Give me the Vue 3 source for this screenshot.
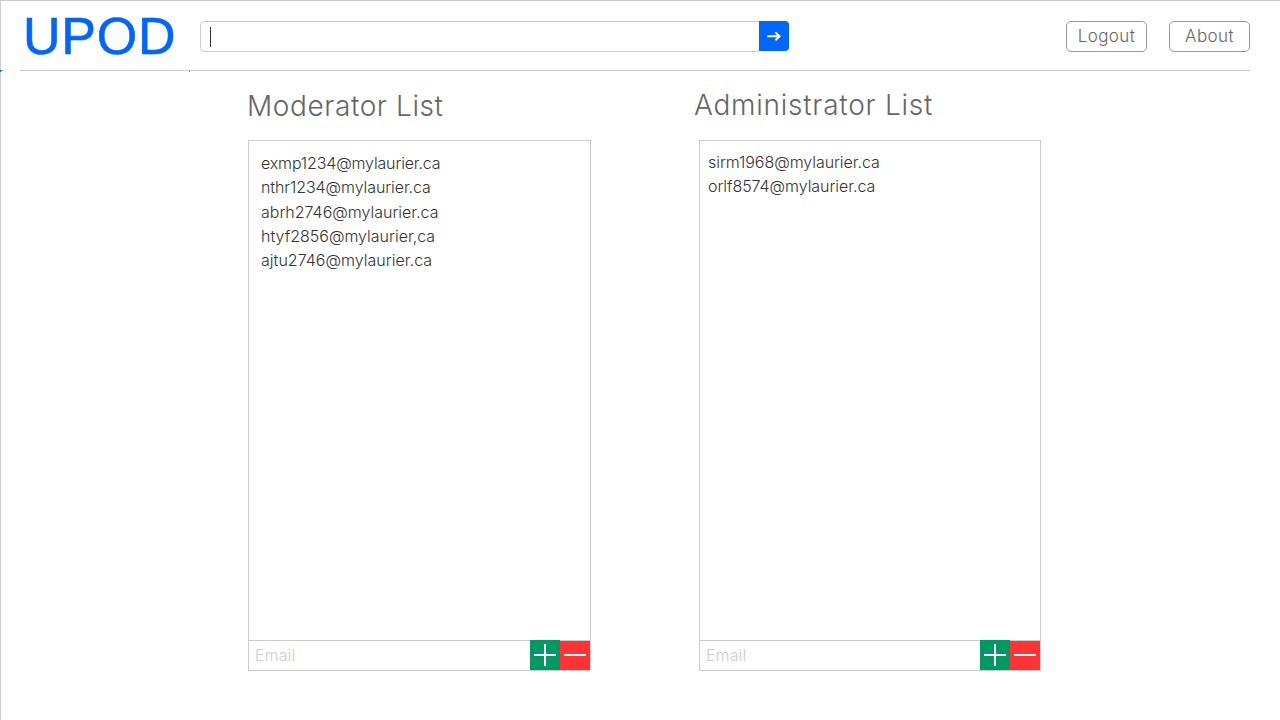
<script setup>
import { ref } from 'vue'

const query = ref('')
const lists = [
  {
    id: 'moderator',
    title: 'Moderator List',
    emails: [
      { address: 'exmp1234@mylaurier.ca', spacing: -0.15 },
      { address: 'nthr1234@mylaurier.ca', spacing: -0.08 },
      { address: 'abrh2746@mylaurier.ca', spacing: 0 },
      { address: 'htyf2856@mylaurier,ca', spacing: 0 },
      { address: 'ajtu2746@mylaurier.ca', spacing: 0.03 },
    ],
  },
  {
    id: 'administrator',
    title: 'Administrator List',
    emails: [
      { address: 'sirm1968@mylaurier.ca', spacing: -0.05 },
      { address: 'orlf8574@mylaurier.ca', spacing: -0.05 },
    ],
  },
]
</script>

<template>
  <div class="page">
    <header class="bar">
      <div class="logo">UPOD</div>
      <div class="search">
        <div class="field"><span class="caret"></span>{{ query }}</div>
        <button class="go" aria-label="Search">
          <svg width="30" height="30" viewBox="0 0 30 30">
            <path d="M8.3 15.3H20.5M16.4 11.4L20.5 15.3L16.4 19.2" fill="none" stroke="#fff" stroke-width="2" />
          </svg>
        </button>
      </div>
      <nav class="nav">
        <button class="btn logout">Logout</button>
        <button class="btn about">About</button>
      </nav>
    </header>
    <svg class="ticks" width="191" height="4" viewBox="0 0 191 4">
      <path d="M0 0H4L1 1V2H0Z" fill="#06f" />
      <path d="M189 1h1v1h-1z" fill="#2b62c4" />
    </svg>
    <main class="lists">
      <section v-for="list in lists" :key="list.id" :class="list.id">
        <h2>{{ list.title }}</h2>
        <div class="panel">
          <ul>
            <li v-for="email in list.emails" :key="email.address" :style="{ letterSpacing: email.spacing + 'px' }">{{ email.address }}</li>
          </ul>
          <div class="entry">
            <span class="placeholder">Email</span>
            <button class="act add" aria-label="Add">
              <svg width="30" height="30" viewBox="0 0 30 30">
                <path d="M4 15H26M15 4V26" stroke="#fff" stroke-width="2" />
              </svg>
            </button>
            <button class="act remove" aria-label="Remove">
              <svg width="30" height="29" viewBox="0 0 30 29">
                <path d="M4 14H26" stroke="#fff" stroke-width="2" />
              </svg>
            </button>
          </div>
        </div>
      </section>
    </main>
  </div>
</template>

<style>
body {
  background: #fff;
  overflow: hidden;
}
</style>

<style scoped>
* {
  box-sizing: border-box;
}
.page {
  position: relative;
  width: 1280px;
  height: 720px;
  border-top: 1px solid #ccc;
  border-left: 1px solid #ccc;
  font-family: Inter, 'Open Sans', sans-serif;
  font-weight: 300;
}
button {
  padding: 0;
  border: 0;
  background: none;
  font: inherit;
}
svg {
  display: block;
}
.bar {
  display: flex;
  align-items: flex-start;
  width: 1230px;
  height: 70px;
  margin-left: 19px;
  padding-top: 20px;
  border-bottom: 1px solid #ccc;
}
.logo {
  width: 180px;
  margin-top: -15px;
  padding-left: 3px;
  font: 400 52px/60px 'Liberation Sans', Arial, sans-serif;
  letter-spacing: 0.8px;
  color: #06f;
  -webkit-text-stroke: 0.6px #06f;
}
.search {
  display: flex;
  width: 589px;
  height: 31px;
}
.field {
  flex: 1;
  display: flex;
  padding: 5px 0 0 9px;
  border: 1px solid #ccc;
  border-right: 0;
  border-radius: 5px 0 0 5px;
}
.caret {
  width: 1px;
  height: 20px;
  background: #333;
}
.go {
  width: 30px;
  height: 30px;
  border-radius: 0 4px 4px 0;
  background: #06f;
}
.nav {
  display: flex;
  gap: 22px;
  margin-left: auto;
}
.btn {
  width: 81px;
  height: 31px;
  border: 1px solid #999;
  border-radius: 5px;
  font-size: 17px;
  line-height: 29px;
  letter-spacing: 0.4px;
  color: #666;
}
.ticks {
  position: absolute;
  left: -1px;
  top: 69px;
}
.lists {
  display: flex;
  gap: 108px;
  padding: 18px 0 0 247px;
}
.moderator {
  width: 343px;
}
.administrator {
  width: 342px;
}
h2 {
  height: 51px;
  margin: 0 0 0 -1px;
  font-size: 28px;
  font-weight: 300;
  line-height: 34px;
  letter-spacing: 0.6px;
  white-space: nowrap;
  color: #666;
}
.administrator h2 {
  margin-left: -5px;
  line-height: 32px;
  letter-spacing: 0.75px;
}
.panel {
  display: flex;
  flex-direction: column;
  justify-content: space-between;
  height: 531px;
  border: 1px solid #ccc;
}
ul {
  margin: 0;
  padding: 10px 0 0 12px;
  list-style: none;
}
.administrator ul {
  padding: 9px 0 0 8px;
}
li {
  font-size: 16px;
  line-height: 24.3px;
  color: #333;
}
.entry {
  position: relative;
  display: flex;
  height: 30px;
  border-top: 1px solid #ccc;
}
.placeholder {
  flex: 1;
  padding-left: 6px;
  font-size: 16px;
  line-height: 28px;
  letter-spacing: 0.1px;
  color: #ccc;
}
.act {
  width: 30px;
}
.add {
  height: 30px;
  margin-top: -1px;
  background: #096;
}
.remove {
  height: 29px;
  background: #f33;
}
</style>
